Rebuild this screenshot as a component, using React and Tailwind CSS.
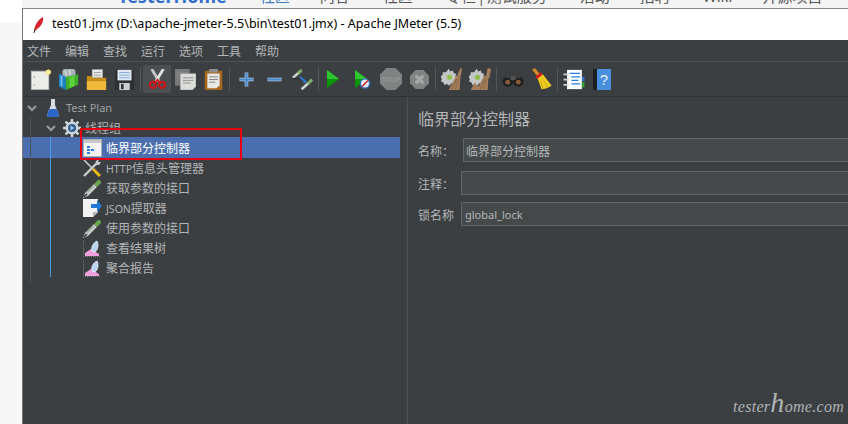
const cjk = { fontFamily: '"Noto Sans CJK SC", "Noto Sans", sans-serif' };
const latin = { fontFamily: '"Noto Sans", sans-serif' };

const Svg = ({ w = 21, h = 21, vb = "0 0 24 24", children, className = "" }) => (
  <svg width={w} height={h} viewBox={vb} className={`shrink-0 ${className}`}>
    {children}
  </svg>
);

// toolbar icons
const NewIcon = () => (
  <Svg>
    <rect x="1.5" y="2.5" width="20" height="21" fill="#ecece9" stroke="#b9b9b4" />
    <circle cx="5" cy="9" r="0.9" fill="#999" />
    <circle cx="5" cy="18" r="0.9" fill="#999" />
    <circle cx="21" cy="3.5" r="3" fill="#f6ee8a" />
  </Svg>
);
const TemplateIcon = () => (
  <Svg>
    <rect x="5" y="0" width="15" height="11" rx="3" fill="#a9b4b8" />
    <path d="M8 2l2 5M13 1l1 6" stroke="#dfe5e6" strokeWidth="1.5" />
    <path d="M1 5l8 4v15l-8-4z" fill="#1d7fc4" />
    <path d="M3 7l2 1v12l-2-1z" fill="#7cc0ea" />
    <path d="M9 9l14-3v12l-14 6z" fill="#3fae2a" />
    <path d="M13 9l6-1v11l-6 3z" fill="#5ed03a" />
  </Svg>
);
const OpenIcon = () => (
  <Svg>
    <rect x="7" y="0.5" width="12" height="13" fill="#e8e8e8" stroke="#999" strokeWidth="0.5" />
    <path d="M9 4h8M9 7h8M9 10h8" stroke="#999" />
    <path d="M1 8h5l1 2h16v13H1z" fill="#c88d18" />
    <path d="M1 14h22v9a1 1 0 0 1-1 1H2a1 1 0 0 1-1-1z" fill="#efb93a" />
  </Svg>
);
const SaveIcon = () => (
  <Svg>
    <rect x="1" y="1" width="22" height="23" rx="1" fill="#2d2f33" />
    <rect x="4" y="1" width="16" height="12" fill="#dfe8f3" />
    <path d="M6 4h12M6 7h12M6 10h12" stroke="#7ca5d6" />
    <rect x="6" y="16" width="12" height="8" fill="#c9ccd0" />
    <rect x="8" y="17" width="3" height="6" fill="#333" />
  </Svg>
);
const CutIcon = () => (
  <Svg w={17} h={20} vb="0 0 20 24">
    <path d="M3 0l9 15" stroke="#c5c8c9" strokeWidth="3.4" fill="none" />
    <path d="M17 0L8 15" stroke="#e0e2e2" strokeWidth="3.4" fill="none" />
    <circle cx="4.5" cy="19" r="3.6" fill="none" stroke="#c8161b" strokeWidth="2.6" />
    <circle cx="15.5" cy="19" r="3.6" fill="none" stroke="#c8161b" strokeWidth="2.6" />
    <path d="M7 16l3-3 3 3" stroke="#c8161b" strokeWidth="2.2" fill="none" />
  </Svg>
);
const CopyIcon = () => (
  <Svg>
    <rect x="0" y="0" width="17" height="19" fill="#77797a" />
    <path d="M2 4h12M2 7h12M2 10h12" stroke="#8c8e8f" />
    <path d="M6 5h18v15l-4 4H6z" fill="#dcdcda" stroke="#888" strokeWidth="0.5" />
    <path d="M9 10h12M9 13h12M9 16h9" stroke="#8a8a8a" />
  </Svg>
);
const PasteIcon = () => (
  <Svg>
    <rect x="2" y="2" width="20" height="22" rx="1" fill="#a5661e" />
    <path d="M5 5h14v14l-4 3H5z" fill="#e8e8e6" />
    <rect x="7" y="0" width="10" height="4" rx="1" fill="#8b8d8e" />
    <path d="M7 9h10M7 12h10M7 15h7" stroke="#777" />
  </Svg>
);
const PlusIcon = () => (
  <Svg w={15} h={15} vb="0 0 15 15">
    <path d="M7.5 0.5v14M0.5 7.5h14" stroke="#a8c6e6" strokeWidth="3.6" />
    <path d="M7.5 1v13M1 7.5h13" stroke="#4a88c7" strokeWidth="2.2" />
  </Svg>
);
const MinusIcon = () => (
  <Svg w={15} h={15} vb="0 0 15 15">
    <path d="M0.5 7.5h14" stroke="#a8c6e6" strokeWidth="3.6" />
    <path d="M1 7.5h13" stroke="#4a88c7" strokeWidth="2.2" />
  </Svg>
);
const ExpandIcon = () => (
  <Svg>
    <path d="M1 10l7-6" stroke="#c9cfc8" strokeWidth="3" />
    <path d="M7 5l4-4" stroke="#7fb069" strokeWidth="3.4" />
    <path d="M11 23l8-7" stroke="#d4d6d4" strokeWidth="3" />
    <path d="M18 17l5-5" stroke="#7fb069" strokeWidth="3.4" />
    <path d="M1 11h8" stroke="#2a2c2e" strokeWidth="1.5" />
    <path d="M9 9l6 5" stroke="#2d7fe0" strokeWidth="2" />
    <path d="M17 16l-5-1 3-3z" fill="#2d7fe0" />
  </Svg>
);
const Play = ({ ban }) => (
  <Svg w={18} h={20} vb="0 0 18 20">
    <path d="M1 1l12 9-12 9z" fill="#0b950b" />
    <path d="M1 1l12 9H1z" fill="#2fc62f" />
    {ban && (
      <g>
        <circle cx="11" cy="14.5" r="4.6" fill="#e8f0fa" stroke="#2f6fc0" strokeWidth="1.4" />
        <path d="M8 17.5l6-6" stroke="#d01818" strokeWidth="1.4" />
      </g>
    )}
  </Svg>
);
const StopIcon = () => (
  <Svg w={22} h={22} vb="0 0 24 24">
    <path d="M7 0h10l7 7v10l-7 7H7l-7-7V7z" fill="#818383" />
    <text x="12" y="15" textAnchor="middle" fontSize="7.5" fontWeight="700" fill="#939595" fontFamily="Liberation Sans">STOP</text>
  </Svg>
);
const ShutdownIcon = () => (
  <Svg w={19} h={19} vb="0 0 20 20">
    <path d="M6 0h8l6 6v8l-6 6H6l-6-6V6z" fill="#818383" />
    <path d="M6 6l8 8M14 6l-8 8" stroke="#a6a8a8" strokeWidth="3.4" />
  </Svg>
);
const ClearIcon = ({ all }) => (
  <Svg w={22} h={22} vb="0 0 26 26">
    <path d="M9 1l2 3 3-1 1 3 3 1-1 3 2 3-3 2 0 3-4 0-2 3-3-2-3 1-1-3-3-1 1-3-2-3 3-2 0-3 4 0z" fill="#c3c6c4" />
    <circle cx="10" cy="11" r="3" fill="#8fc04a" />
    <path d="M9 26l9-17 5 2-1 15z" fill="#a57f5c" />
    <path d="M13 25l6-13M17 25l4-12" stroke="#80603f" />
    {all && <path d="M2 26l5-9 7 9z" fill="#a57f5c" />}
    {all && <path d="M20 10l2-10 4 1-2 11z" fill="#a57f5c" />}
    {!all && <path d="M19 9l4-9 2 1-2 10z" fill="#a57f5c" />}
  </Svg>
);
const SearchIcon = () => (
  <Svg w={22} h={15} vb="0 0 24 17">
    <circle cx="6" cy="11" r="5.8" fill="#1e1f20" />
    <circle cx="18" cy="11" r="5.8" fill="#1e1f20" />
    <circle cx="6" cy="11.5" r="2.8" fill="#8a5a3a" />
    <circle cx="18" cy="11.5" r="2.8" fill="#8a5a3a" />
    <rect x="4" y="0" width="6" height="7" fill="#3b3d3f" />
    <rect x="14" y="0" width="6" height="7" fill="#3b3d3f" />
    <rect x="9" y="5" width="6" height="4" fill="#555" />
  </Svg>
);
const BroomIcon = () => (
  <Svg w={21} h={22} vb="0 0 24 26">
    <path d="M1 2l3-2 7 8-3 3z" fill="#d58a2a" />
    <path d="M6 11l5-4 3 1 10 13c-5 3-9 4-12 4L8 14z" fill="#eecb1e" />
    <path d="M14 13l5 10M11 15l3 9" stroke="#c9a512" />
    <path d="M5 10l6-5 2 3-6 5z" fill="#d21c1c" />
  </Svg>
);
const LogIcon = () => (
  <Svg w={22} h={21} vb="0 0 24 24">
    <rect x="4" y="1" width="17" height="22" fill="#fff" />
    <path d="M7 5h12M9 9h10M9 13h8M9 17h10" stroke="#2a7de0" strokeWidth="1.5" />
    <path d="M0 6h6M0 12h6M0 18h6" stroke="#cfd1d1" strokeWidth="2" />
    <rect x="21" y="9" width="3" height="5" fill="#3a74c4" />
    <rect x="21" y="15" width="3" height="6" fill="#3aa03a" />
  </Svg>
);
const HelpIcon = () => (
  <Svg w={18} h={21} vb="0 0 18 21">
    <rect x="0" y="0" width="6" height="21" rx="1" fill="#1d1f21" />
    <rect x="4" y="0" width="14" height="21" fill="#4a8fdc" />
    <text x="11" y="16" textAnchor="middle" fontSize="15" fill="#e6f0fb" fontFamily="Liberation Sans">?</text>
  </Svg>
);

// tree icons
const FlaskIcon = () => (
  <Svg w={12} h={18} vb="0 0 12 18">
    <path d="M4 0h4v6l4 10c0 1-1 2-2 2H2c-1 0-2-1-2-2L4 6z" fill="#d8dcdf" />
    <path d="M2.5 10h7l2.5 6c0 1-1 2-2 2H2c-1 0-2-1-2-2z" fill="#2b66c9" />
  </Svg>
);
const GearIcon = () => (
  <Svg w={18} h={18} vb="0 0 18 18">
    <circle cx="9" cy="9" r="6.5" fill="#d3d6d6" />
    <path d="M9 0v18M0 9h18M2.6 2.6l12.8 12.8M15.4 2.6L2.6 15.4" stroke="#d3d6d6" strokeWidth="2.6" />
    <circle cx="9" cy="9" r="4" fill="#2c5f8f" />
    <path d="M7.5 6.5l4 2.5-4 2.5z" fill="#a8c8e4" />
  </Svg>
);
const ControllerIcon = () => (
  <Svg w={19} h={18} vb="0 0 19 18">
    <rect x="0.5" y="0.5" width="18" height="17" fill="#f4f4f4" stroke="#aeb0b0" />
    <rect x="1" y="1" width="17" height="3" fill="#c5c8ca" />
    <rect x="4" y="7" width="3" height="2" fill="#2a7de0" />
    <rect x="4" y="10" width="3" height="2" fill="#2a7de0" />
    <rect x="4" y="13" width="3" height="2" fill="#2a7de0" />
    <rect x="8" y="10" width="3" height="2" fill="#2a7de0" />
  </Svg>
);
const ToolsIcon = () => (
  <Svg w={18} h={18} vb="0 0 18 18">
    <path d="M10 10l7 7" stroke="#e8b81c" strokeWidth="3" />
    <path d="M1 1l9 9" stroke="#c9cbcb" strokeWidth="1.6" />
    <path d="M1 17L13 5" stroke="#c9cbcb" strokeWidth="2.4" />
    <path d="M12 6l1-4 3-2-1 3 3 0-2 3z" fill="#c9cbcb" />
  </Svg>
);
const PipetteIcon = () => (
  <Svg w={19} h={19} vb="0 0 19 19">
    <path d="M0 19l2-5 9-9 3 3-9 9z" fill="#c5c8c7" />
    <path d="M1 18l3-3" stroke="#333" strokeWidth="1.5" />
    <path d="M4 13l6-6" stroke="#8fa08a" strokeWidth="1.6" />
    <path d="M11 5l4-4a2.5 2.5 0 0 1 3 3l-4 4z" fill="#6aa84f" />
  </Svg>
);
const JsonIcon = () => (
  <Svg w={19} h={18} vb="0 0 19 18">
    <path d="M0 0h15v13l-5 5H0z" fill="#f2f2f2" />
    <path d="M10 18l5-5h-5z" fill="#b5b5b5" />
    <path d="M8 5h6V1l5 6-5 6V9H8z" fill="#1f78d6" />
  </Svg>
);
const ResultIcon = () => (
  <Svg w={17} h={17} vb="0 0 17 17">
    <path d="M0.5 0v16.5H17" stroke="#74787b" strokeDasharray="1 1" fill="none" />
    <path d="M2 16v-3l6-4 8 5v2z" fill="#f0a0dc" />
    <path d="M9 11c-1-4 1-8 5-10 2 3 1 9-2 11z" fill="#b9d4f2" stroke="#f4f8fc" strokeWidth="0.7" />
  </Svg>
);

const Sep = () => <div className="w-px h-[24px] bg-[#55585a] mx-[2px] shrink-0" />;
const Btn = ({ active, children }) => (
  <div className={`w-[28px] h-[28px] flex items-center justify-center shrink-0 rounded-[2px] ${active ? "bg-[#4c5052]" : ""}`}>
    {children}
  </div>
);

const Row = ({ icon, prefix, label, selected }) => (
  <div
    className={`flex items-center pl-[60px] ${selected ? "bg-[#4b6eaf] h-[21px] -mt-[1px] pt-[1px]" : "h-[20px]"}`}
  >
    <div className="w-[23px] shrink-0 flex items-center">{icon}</div>
    <span
      className={`text-[12px] leading-[20px] whitespace-nowrap ${selected ? "text-white" : "text-[#b3b6b8]"}`}
      style={cjk}
    >
      {prefix && <span className="text-[10.5px]" style={latin}>{prefix}</span>}
      {label}
    </span>
  </div>
);

const Field = ({ label, labelW, value, small, mb = 0 }) => (
  <div style={{ marginBottom: mb }} className="flex items-center h-[24px]">
    <span style={{ width: labelW, ...cjk }} className="text-[12px] pt-[2px] text-[#b3b6b8] shrink-0 whitespace-nowrap">
      {label}
    </span>
    <div
      style={small ? latin : cjk}
      className={`flex-1 h-[24px] border border-[#646464] border-r-0 bg-[#45494a] leading-[24px] pl-[2px] text-[#b3b6b8] ${small ? "text-[11px] pl-[3px]" : "text-[12px]"}`}
    >
      {value}
    </div>
  </div>
);

const Chevron = () => (
  <Svg w={12} h={12} vb="0 0 12 12">
    <path d="M2 4l4 4 4-4" stroke="#9a9d9f" strokeWidth="2" fill="none" />
  </Svg>
);

export default function App() {
  return (
    <div className="w-[848px] h-[424px] overflow-hidden bg-white flex flex-col relative" style={latin}>
      {/* page behind the window */}
      <div className="h-[9px] overflow-hidden bg-[#f4f4f4] border-b border-[#888] ml-[22px] shrink-0">
        <div className="flex items-end h-[5px] text-[15px] leading-[18px] text-[#555] whitespace-nowrap" style={cjk}>
          <span className="ml-[96px] font-bold text-[#2f6fd0] text-[18px]" style={latin}>TesterHome</span>
          <span className="ml-[33px] text-[#3c7ac8]">社区</span>
          <span className="ml-[30px]">问答</span>
          <span className="ml-[33px]">社区</span>
          <span className="ml-[33px]">专栏 | 测试服务</span>
          <span className="ml-[33px]">活动</span>
          <span className="ml-[30px]">招聘</span>
          <span className="ml-[33px]" style={latin}>Wiki</span>
          <span className="ml-[30px]">开源项目</span>
        </div>
      </div>
      <div className="flex flex-1 min-h-0">
        <div className="w-[22px] shrink-0 flex flex-col">
          <div className="h-[13px] bg-white" />
          <div className="flex-1 bg-[#f7f7f7]" />
        </div>
        <div className="flex-1 min-w-0 flex flex-col border-l border-[#777]">
          {/* title bar */}
          <div className="h-[31px] bg-white flex items-center pl-[10px] shrink-0">
            <Svg w={11} h={16} vb="0 0 11 16">
              <path d="M1 15c0-5 3-12 9-15 1 4-2 10-6 12z" fill="#d9232e" />
              <path d="M1 16l1-4" stroke="#333" />
            </Svg>
            <span className="ml-[8px] text-[12.5px] text-black whitespace-nowrap" style={latin}>
              test01.jmx (D:\apache-jmeter-5.5\bin\test01.jmx) - Apache JMeter (5.5)
            </span>
          </div>
          {/* menu */}
          <div className="h-[22px] bg-[#3c3f41] border-b border-[#515151] flex items-center pl-[4px] gap-[14px] text-[12px] text-[#b3b6b8] shrink-0" style={cjk}>
            <span>文件</span>
            <span>编辑</span>
            <span>查找</span>
            <span>运行</span>
            <span>选项</span>
            <span>工具</span>
            <span>帮助</span>
          </div>
          {/* toolbar */}
          <div className="h-[35px] bg-[#3c3f41] border-b border-[#2f3133] flex items-center pl-[3px] shrink-0">
            <Btn><NewIcon /></Btn>
            <Btn><TemplateIcon /></Btn>
            <Btn><OpenIcon /></Btn>
            <Btn><SaveIcon /></Btn>
            <Sep />
            <Btn active><CutIcon /></Btn>
            <Btn><CopyIcon /></Btn>
            <Btn><PasteIcon /></Btn>
            <Sep />
            <Btn><PlusIcon /></Btn>
            <Btn><MinusIcon /></Btn>
            <Btn><ExpandIcon /></Btn>
            <Sep />
            <Btn><Play /></Btn>
            <Btn><Play ban /></Btn>
            <Btn><StopIcon /></Btn>
            <Btn><ShutdownIcon /></Btn>
            <Sep />
            <Btn><ClearIcon /></Btn>
            <Btn><ClearIcon all /></Btn>
            <Sep />
            <Btn><SearchIcon /></Btn>
            <Btn><BroomIcon /></Btn>
            <Sep />
            <Btn><LogIcon /></Btn>
            <Btn><HelpIcon /></Btn>
          </div>
          {/* split */}
          <div className="flex-1 min-h-0 flex bg-[#3c3f41]">
            <div className="w-[377px] shrink-0 pt-[1px] relative">
              {/* tree guide lines */}
              <div className="absolute left-[7px] top-[20px] w-px h-[166px] bg-[#4e5254]" />
              <div className="absolute left-[27px] top-[40px] w-px h-[140px] bg-[#4a9ae8]" />
              <div className="h-[20px] flex items-center pl-[3px]">
                <Chevron />
                <div className="ml-[9px] w-[19px]"><FlaskIcon /></div>
                <span className="text-[11px] text-[#9fa2a4]" style={latin}>Test Plan</span>
              </div>
              <div className="h-[20px] flex items-center pl-[22px]">
                <Chevron />
                <div className="ml-[6px] w-[22px]"><GearIcon /></div>
                <span className="text-[12px] text-[#b3b6b8]" style={cjk}>线程组</span>
              </div>
              <Row selected icon={<ControllerIcon />} label="临界部分控制器" />
              <Row icon={<ToolsIcon />} prefix="HTTP" label="信息头管理器" />
              <Row icon={<PipetteIcon />} label="获取参数的接口" />
              <Row icon={<JsonIcon />} prefix="JSON" label="提取器" />
              <Row icon={<PipetteIcon />} label="使用参数的接口" />
              <Row icon={<ResultIcon />} label="查看结果树" />
              <Row icon={<ResultIcon />} label="聚合报告" />
            </div>
            <div className="w-[7px] shrink-0" />
            <div className="flex-1 min-w-0 border-l border-[#4e5254] pl-[10px] pt-[9px] flex flex-col">
              <div className="text-[16px] leading-[24px] text-[#b3b6b8] mb-[8px]" style={cjk}>临界部分控制器</div>
              <Field label="名称：" labelW={45} value="临界部分控制器" mb={9} />
              <Field label="注释：" labelW={43} value="" mb={7} />
              <Field label="锁名称" labelW={43} value="global_lock" small />
            </div>
          </div>
        </div>
      </div>

      {/* overlays */}
      <div className="absolute left-[733px] top-[393px] text-[16px] leading-[20px] italic text-[#b0b3b4] tracking-[0.3px] whitespace-nowrap" style={{ fontFamily: '"Liberation Serif", serif' }}>
        tester<span className="text-[28px] leading-[20px]">h</span>ome.com
      </div>
      <div className="absolute left-[80px] top-[128px] w-[162px] h-[32px] border-2 border-[#e60012]" />
    </div>
  );
}
